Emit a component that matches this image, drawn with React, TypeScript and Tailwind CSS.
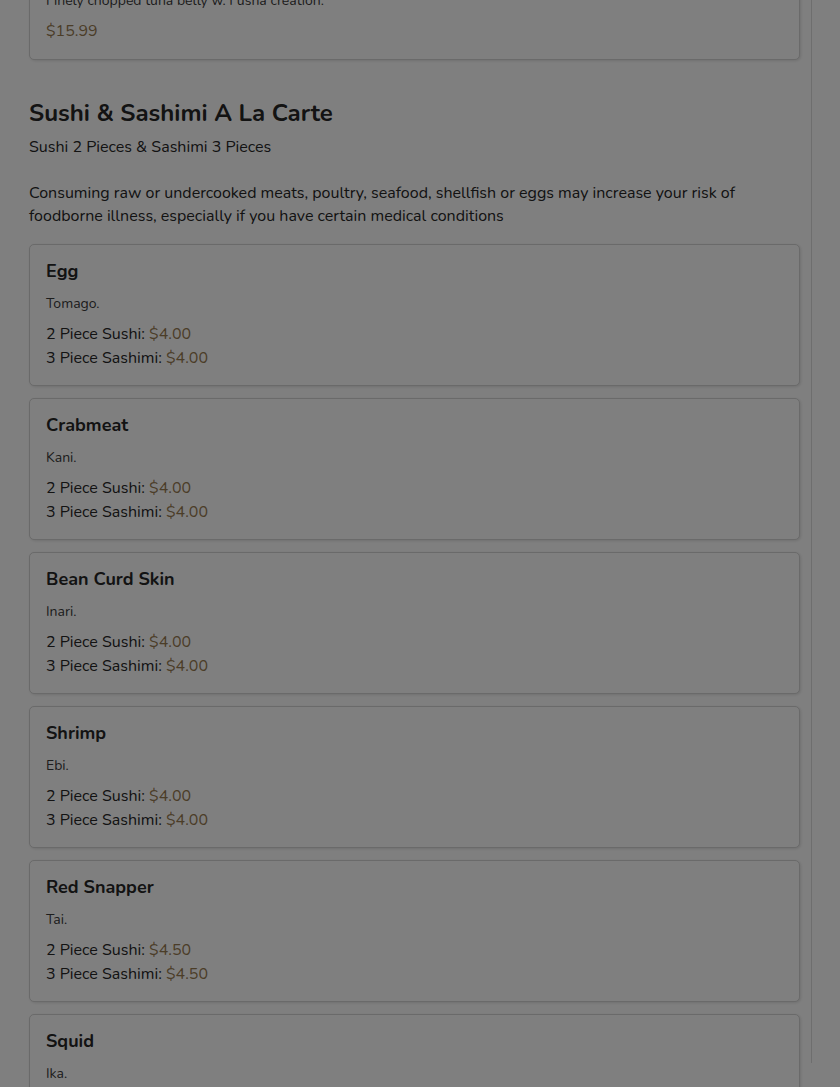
import React from "react";

type Item = { name: string; desc: string; sushi: string; sashimi: string };

const items: Item[] = [
  { name: "Egg", desc: "Tomago.", sushi: "$4.00", sashimi: "$4.00" },
  { name: "Crabmeat", desc: "Kani.", sushi: "$4.00", sashimi: "$4.00" },
  { name: "Bean Curd Skin", desc: "Inari.", sushi: "$4.00", sashimi: "$4.00" },
  { name: "Shrimp", desc: "Ebi.", sushi: "$4.00", sashimi: "$4.00" },
  { name: "Red Snapper", desc: "Tai.", sushi: "$4.50", sashimi: "$4.50" },
  { name: "Squid", desc: "Ika.", sushi: "$4.50", sashimi: "$4.50" },
];

function Card({ item }: { item: Item }) {
  return (
    <div className="rounded-[5px] border border-[#d4d4d4] bg-white px-4 pt-[14px] pb-[15px] shadow-[1px_1px_3px_rgba(0,0,0,0.12)]">
      <div className="text-lg leading-6 font-bold text-[#262626]">{item.name}</div>
      <div className="mt-[11px] text-sm leading-5 text-[#3a3a3a]">{item.desc}</div>
      <div className="mt-2 text-base leading-6 text-[#262626]">
        <div>
          2 Piece Sushi: <span className="text-[#977a50]">{item.sushi}</span>
        </div>
        <div>
          3 Piece Sashimi: <span className="text-[#977a50]">{item.sashimi}</span>
        </div>
      </div>
    </div>
  );
}

export default function App() {
  return (
    <div
      className="relative h-[1087px] w-[840px] overflow-hidden bg-white"
      style={{ fontFamily: "'Nunito', 'Lato', 'Noto Sans', sans-serif" }}
    >
      <div className="h-full w-[812px] border-r border-[#dcdcdc] pl-[29px] pr-[11px]">
        <div className="-mt-[24px] rounded-[5px] border border-[#d4d4d4] bg-white px-4 pt-[14px] pb-4 shadow-[1px_1px_3px_rgba(0,0,0,0.12)]">
          <div className="text-sm leading-5 text-[#3a3a3a]">
            Finely chopped tuna belly w. Fusha creation.
          </div>
          <div className="mt-2 text-base leading-6 text-[#977a50]">$15.99</div>
        </div>

        <h2 className="mt-[37px] text-2xl leading-8 font-bold text-[#262626]">
          Sushi &amp; Sashimi A La Carte
        </h2>
        <p className="mt-[6px] text-base leading-6 text-[#262626]">
          Sushi 2 Pieces &amp; Sashimi 3 Pieces
        </p>
        <p className="mt-[23px] text-base leading-[23px] text-[#262626]">
          Consuming raw or undercooked meats, poultry, seafood, shellfish or eggs may
          increase your risk of foodborne illness, especially if you have certain medical
          conditions
        </p>

        <div className="mt-4 flex flex-col gap-3">
          {items.map((it) => (
            <Card key={it.name} item={it} />
          ))}
        </div>
      </div>

      <div className="absolute inset-0 bg-black/50" />
    </div>
  );
}
